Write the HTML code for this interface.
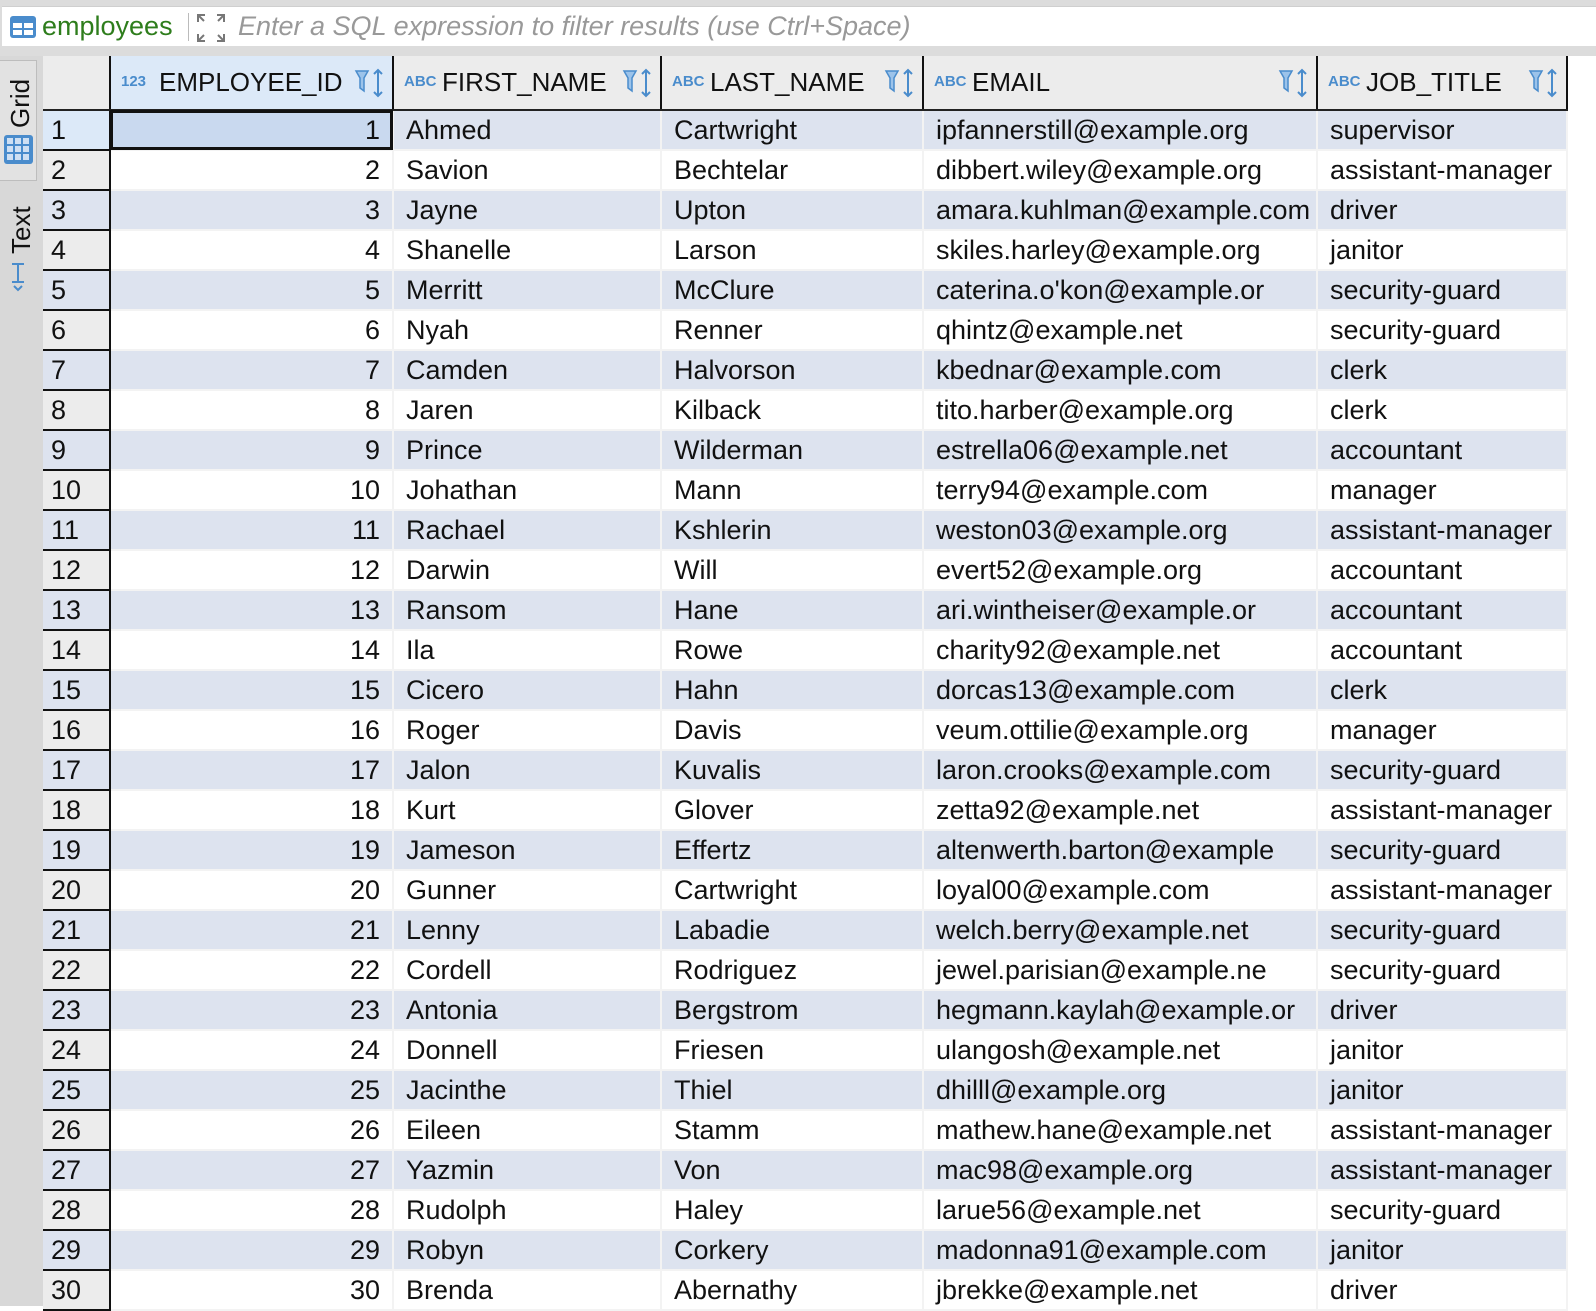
<!DOCTYPE html>
<html><head><meta charset="utf-8"><style>
*{margin:0;padding:0;box-sizing:border-box}
body{width:1596px;height:1306px;overflow:hidden;background:#fff;font-family:"Liberation Sans",Arial,sans-serif;position:relative}
#top{position:absolute;left:0;top:0;width:1596px;height:56px;background:#dcdcdc}
#filter{position:absolute;left:2px;top:6px;width:1594px;height:40px;background:#fff;border-top:1px solid #cfcfcf}
#side{position:absolute;left:0;top:56px;width:43px;height:1250px;background:#d8d8d8}
#gridtab{position:absolute;left:0;top:60px;width:37px;height:121px;background:#e2e2e2;border:1px solid #bdbdbd;border-left:none}
.vt{position:absolute;transform:rotate(-90deg);transform-origin:left top;font-size:26px;color:#111;white-space:nowrap}
table{position:absolute;left:43px;top:56px;width:1524px;border-collapse:collapse;table-layout:fixed;font-size:27px;color:#111}
td,th{height:40px;padding:0 12px;white-space:nowrap;overflow:hidden;border-right:2px solid #f3f3f3;border-bottom:2px solid #f3f3f3}
th{height:54px;background:#ececec;font-weight:normal;font-size:26px;text-align:left;border-right:2px solid #111;border-bottom:2px solid #222;position:relative;padding-left:48px}
td.n{background:#ececec;border-right:2px solid #111;border-bottom:2px solid #111;padding-left:8px}
tr.o td{background:#dde3ef}
td.r{text-align:right}
.ic{position:absolute;left:10px;top:17px;font-size:15px;font-weight:bold;color:#4a8ccc;letter-spacing:0}
.fs{position:absolute;right:8px;top:12px}
</style></head><body>
<div id="top"></div>
<div id="filter">
<svg style="position:absolute;left:7px;top:8px" width="28" height="24"><rect x="1" y="1" width="26" height="22" rx="3" fill="#4a8ccc"/><rect x="4" y="8" width="9" height="5" fill="#fff"/><rect x="15" y="8" width="9" height="5" fill="#fff"/><rect x="4" y="15" width="9" height="5" fill="#fff"/><rect x="15" y="15" width="9" height="5" fill="#fff"/></svg>
<span style="position:absolute;left:40px;top:4px;font-size:27px;color:#2e7d1c">employees</span>
<div style="position:absolute;left:186px;top:6px;width:1px;height:28px;background:#bbb"></div>
<svg style="position:absolute;left:194px;top:6px" width="30" height="30" stroke="#777" stroke-width="2" fill="none"><path d="M2 9V2h7M28 9V2h-7M2 21v7h7M28 21v7h-7M2 2l6 6M28 2l-6 6M2 28l6-6M28 28l-6-6"/></svg>
<span style="position:absolute;left:236px;top:4px;font-size:27px;color:#999;font-style:italic">Enter a SQL expression to filter results (use Ctrl+Space)</span>
</div>
<div id="side"></div>
<div id="gridtab"></div>
<div class="vt" style="left:5px;top:128px">Grid</div>
<svg style="position:absolute;left:3px;top:134px" width="31" height="31"><rect x="1" y="1" width="29" height="29" rx="3" fill="#4a8ccc"/><g fill="#cfe0f3"><rect x="4" y="4" width="6" height="6"/><rect x="12" y="4" width="6" height="6"/><rect x="20" y="4" width="6" height="6"/><rect x="4" y="12" width="6" height="6"/><rect x="12" y="12" width="6" height="6"/><rect x="20" y="12" width="6" height="6"/><rect x="4" y="20" width="6" height="6"/><rect x="12" y="20" width="6" height="6"/><rect x="20" y="20" width="6" height="6"/></g></svg>
<div class="vt" style="left:6px;top:254px">Text</div>
<svg style="position:absolute;left:10px;top:262px" width="18" height="30" stroke="#4a8ccc" stroke-width="2" fill="none"><path d="M2 2h12M8 2v18M2 20h12M4 24l4 4 4-4"/></svg>
<table>
<colgroup><col style="width:67px"><col style="width:283px"><col style="width:268px"><col style="width:262px"><col style="width:394px"><col style="width:250px"></colgroup>
<tr><th style="background:#ececec;border-right:2px solid #111"></th>
<th style="background:#dce9f8"><span class="ic">123</span>EMPLOYEE_ID<svg class="fs" width="30" height="30"><path d="M2 3h12l-4 7v13l-4-3V10z" fill="#9cc3ea" stroke="#4a8ccc" stroke-width="1.5"/><path d="M24 2v26M20 6l4-4 4 4M20 24l4 4 4-4" stroke="#4a8ccc" stroke-width="2" fill="none"/></svg></th>
<th><span class="ic">ABC</span>FIRST_NAME<svg class="fs" width="30" height="30"><path d="M2 3h12l-4 7v13l-4-3V10z" fill="#9cc3ea" stroke="#4a8ccc" stroke-width="1.5"/><path d="M24 2v26M20 6l4-4 4 4M20 24l4 4 4-4" stroke="#4a8ccc" stroke-width="2" fill="none"/></svg></th>
<th><span class="ic">ABC</span>LAST_NAME<svg class="fs" width="30" height="30"><path d="M2 3h12l-4 7v13l-4-3V10z" fill="#9cc3ea" stroke="#4a8ccc" stroke-width="1.5"/><path d="M24 2v26M20 6l4-4 4 4M20 24l4 4 4-4" stroke="#4a8ccc" stroke-width="2" fill="none"/></svg></th>
<th><span class="ic">ABC</span>EMAIL<svg class="fs" width="30" height="30"><path d="M2 3h12l-4 7v13l-4-3V10z" fill="#9cc3ea" stroke="#4a8ccc" stroke-width="1.5"/><path d="M24 2v26M20 6l4-4 4 4M20 24l4 4 4-4" stroke="#4a8ccc" stroke-width="2" fill="none"/></svg></th>
<th><span class="ic">ABC</span>JOB_TITLE<svg class="fs" width="30" height="30"><path d="M2 3h12l-4 7v13l-4-3V10z" fill="#9cc3ea" stroke="#4a8ccc" stroke-width="1.5"/><path d="M24 2v26M20 6l4-4 4 4M20 24l4 4 4-4" stroke="#4a8ccc" stroke-width="2" fill="none"/></svg></th></tr>
<tr class="o"><td class="n" style="background:#dce9f8">1</td><td class="r" style="background:#c9d9ef;outline:3px solid #111;outline-offset:-3px">1</td><td>Ahmed</td><td>Cartwright</td><td>ipfannerstill@example.org</td><td>supervisor</td></tr>
<tr><td class="n">2</td><td class="r">2</td><td>Savion</td><td>Bechtelar</td><td>dibbert.wiley@example.org</td><td>assistant-manager</td></tr>
<tr class="o"><td class="n">3</td><td class="r">3</td><td>Jayne</td><td>Upton</td><td>amara.kuhlman@example.com</td><td>driver</td></tr>
<tr><td class="n">4</td><td class="r">4</td><td>Shanelle</td><td>Larson</td><td>skiles.harley@example.org</td><td>janitor</td></tr>
<tr class="o"><td class="n">5</td><td class="r">5</td><td>Merritt</td><td>McClure</td><td>caterina.o'kon@example.or</td><td>security-guard</td></tr>
<tr><td class="n">6</td><td class="r">6</td><td>Nyah</td><td>Renner</td><td>qhintz@example.net</td><td>security-guard</td></tr>
<tr class="o"><td class="n">7</td><td class="r">7</td><td>Camden</td><td>Halvorson</td><td>kbednar@example.com</td><td>clerk</td></tr>
<tr><td class="n">8</td><td class="r">8</td><td>Jaren</td><td>Kilback</td><td>tito.harber@example.org</td><td>clerk</td></tr>
<tr class="o"><td class="n">9</td><td class="r">9</td><td>Prince</td><td>Wilderman</td><td>estrella06@example.net</td><td>accountant</td></tr>
<tr><td class="n">10</td><td class="r">10</td><td>Johathan</td><td>Mann</td><td>terry94@example.com</td><td>manager</td></tr>
<tr class="o"><td class="n">11</td><td class="r">11</td><td>Rachael</td><td>Kshlerin</td><td>weston03@example.org</td><td>assistant-manager</td></tr>
<tr><td class="n">12</td><td class="r">12</td><td>Darwin</td><td>Will</td><td>evert52@example.org</td><td>accountant</td></tr>
<tr class="o"><td class="n">13</td><td class="r">13</td><td>Ransom</td><td>Hane</td><td>ari.wintheiser@example.or</td><td>accountant</td></tr>
<tr><td class="n">14</td><td class="r">14</td><td>Ila</td><td>Rowe</td><td>charity92@example.net</td><td>accountant</td></tr>
<tr class="o"><td class="n">15</td><td class="r">15</td><td>Cicero</td><td>Hahn</td><td>dorcas13@example.com</td><td>clerk</td></tr>
<tr><td class="n">16</td><td class="r">16</td><td>Roger</td><td>Davis</td><td>veum.ottilie@example.org</td><td>manager</td></tr>
<tr class="o"><td class="n">17</td><td class="r">17</td><td>Jalon</td><td>Kuvalis</td><td>laron.crooks@example.com</td><td>security-guard</td></tr>
<tr><td class="n">18</td><td class="r">18</td><td>Kurt</td><td>Glover</td><td>zetta92@example.net</td><td>assistant-manager</td></tr>
<tr class="o"><td class="n">19</td><td class="r">19</td><td>Jameson</td><td>Effertz</td><td>altenwerth.barton@example</td><td>security-guard</td></tr>
<tr><td class="n">20</td><td class="r">20</td><td>Gunner</td><td>Cartwright</td><td>loyal00@example.com</td><td>assistant-manager</td></tr>
<tr class="o"><td class="n">21</td><td class="r">21</td><td>Lenny</td><td>Labadie</td><td>welch.berry@example.net</td><td>security-guard</td></tr>
<tr><td class="n">22</td><td class="r">22</td><td>Cordell</td><td>Rodriguez</td><td>jewel.parisian@example.ne</td><td>security-guard</td></tr>
<tr class="o"><td class="n">23</td><td class="r">23</td><td>Antonia</td><td>Bergstrom</td><td>hegmann.kaylah@example.or</td><td>driver</td></tr>
<tr><td class="n">24</td><td class="r">24</td><td>Donnell</td><td>Friesen</td><td>ulangosh@example.net</td><td>janitor</td></tr>
<tr class="o"><td class="n">25</td><td class="r">25</td><td>Jacinthe</td><td>Thiel</td><td>dhilll@example.org</td><td>janitor</td></tr>
<tr><td class="n">26</td><td class="r">26</td><td>Eileen</td><td>Stamm</td><td>mathew.hane@example.net</td><td>assistant-manager</td></tr>
<tr class="o"><td class="n">27</td><td class="r">27</td><td>Yazmin</td><td>Von</td><td>mac98@example.org</td><td>assistant-manager</td></tr>
<tr><td class="n">28</td><td class="r">28</td><td>Rudolph</td><td>Haley</td><td>larue56@example.net</td><td>security-guard</td></tr>
<tr class="o"><td class="n">29</td><td class="r">29</td><td>Robyn</td><td>Corkery</td><td>madonna91@example.com</td><td>janitor</td></tr>
<tr><td class="n">30</td><td class="r">30</td><td>Brenda</td><td>Abernathy</td><td>jbrekke@example.net</td><td>driver</td></tr>
</table>
</body></html>
